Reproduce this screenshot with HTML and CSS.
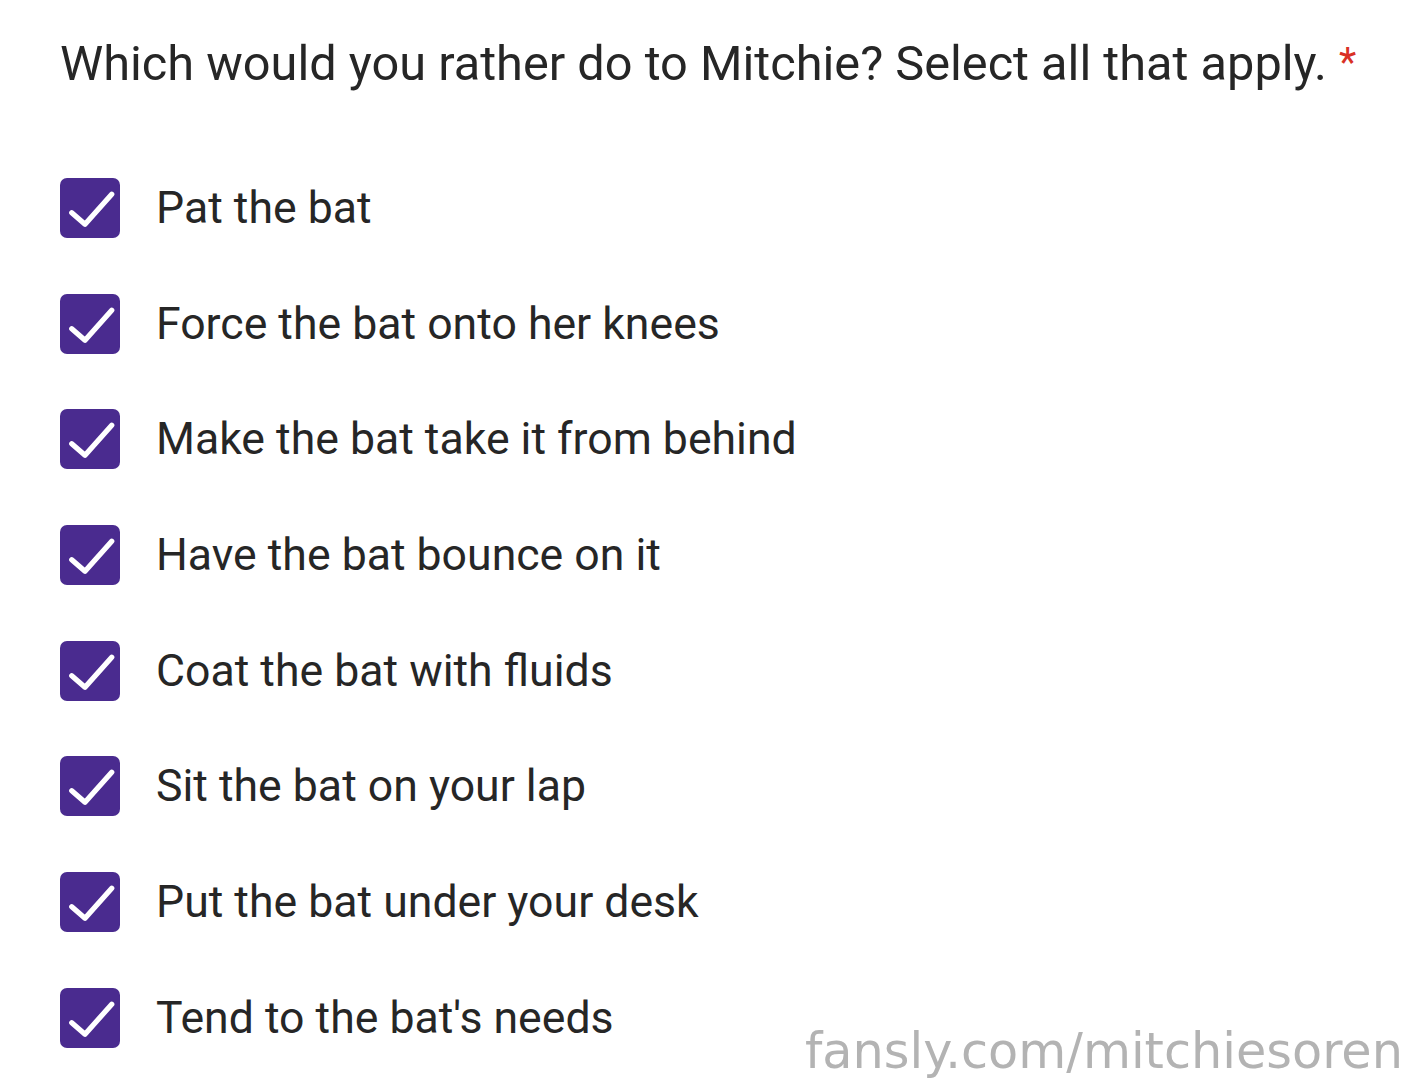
FILE: index.html
```html
<!DOCTYPE html>
<html>
<head>
<meta charset="utf-8">
<link rel="stylesheet" href="styles.css">
</head>
<body>
<div class="form">
  <div class="question">Which would you rather do to Mitchie? Select all that apply. <span class="req">*</span></div>
  <div class="options">
    <div class="option"><span class="box"><svg viewBox="0 0 24 24"><path d="M4.7 13.9l5.3 4.6 10.7-12" /></svg></span><span class="label">Pat the bat</span></div>
    <div class="option"><span class="box"><svg viewBox="0 0 24 24"><path d="M4.7 13.9l5.3 4.6 10.7-12" /></svg></span><span class="label">Force the bat onto her knees</span></div>
    <div class="option"><span class="box"><svg viewBox="0 0 24 24"><path d="M4.7 13.9l5.3 4.6 10.7-12" /></svg></span><span class="label">Make the bat take it from behind</span></div>
    <div class="option"><span class="box"><svg viewBox="0 0 24 24"><path d="M4.7 13.9l5.3 4.6 10.7-12" /></svg></span><span class="label">Have the bat bounce on it</span></div>
    <div class="option"><span class="box"><svg viewBox="0 0 24 24"><path d="M4.7 13.9l5.3 4.6 10.7-12" /></svg></span><span class="label">Coat the bat with fluids</span></div>
    <div class="option"><span class="box"><svg viewBox="0 0 24 24"><path d="M4.7 13.9l5.3 4.6 10.7-12" /></svg></span><span class="label">Sit the bat on your lap</span></div>
    <div class="option"><span class="box"><svg viewBox="0 0 24 24"><path d="M4.7 13.9l5.3 4.6 10.7-12" /></svg></span><span class="label">Put the bat under your desk</span></div>
    <div class="option"><span class="box"><svg viewBox="0 0 24 24"><path d="M4.7 13.9l5.3 4.6 10.7-12" /></svg></span><span class="label">Tend to the bat's needs</span></div>
  </div>
  <div class="watermark">fansly.com/mitchiesoren</div>
</div>
</body>
</html>
```
FILE: styles.css
```css
html, body {
  margin: 0;
  padding: 0;
  background: #ffffff;
}
.form {
  position: relative;
  width: 1414px;
  height: 1080px;
  overflow: hidden;
  font-family: Roboto, "Liberation Sans", sans-serif;
  color: #262626;
}
.question {
  padding: 33px 0 0 60px;
  font-size: 48.7px;
  line-height: 60px;
  white-space: nowrap;
}
.req {
  color: #d93025;
  font-size: 40px;
  vertical-align: 4px;
}
.options {
  display: flex;
  flex-direction: column;
  padding: 84px 0 0 60px;
  gap: 55.7px;
}
.option {
  display: flex;
  align-items: center;
  height: 60px;
}
.box {
  width: 60px;
  height: 60px;
  border-radius: 7px;
  background: #4a2b8f;
  display: flex;
  flex: none;
}
.box svg {
  width: 60px;
  height: 60px;
  fill: none;
  stroke: #ffffff;
  stroke-width: 2.1;
  stroke-linecap: round;
  stroke-linejoin: round;
}
.label {
  margin-left: 36px;
  font-size: 44.6px;
  line-height: 60px;
  white-space: nowrap;
}
.watermark {
  position: absolute;
  left: 805px;
  top: 1021px;
  font-family: "DejaVu Sans", sans-serif;
  font-size: 49.3px;
  line-height: 60px;
  color: #b3b3b3;
  white-space: nowrap;
}
```
